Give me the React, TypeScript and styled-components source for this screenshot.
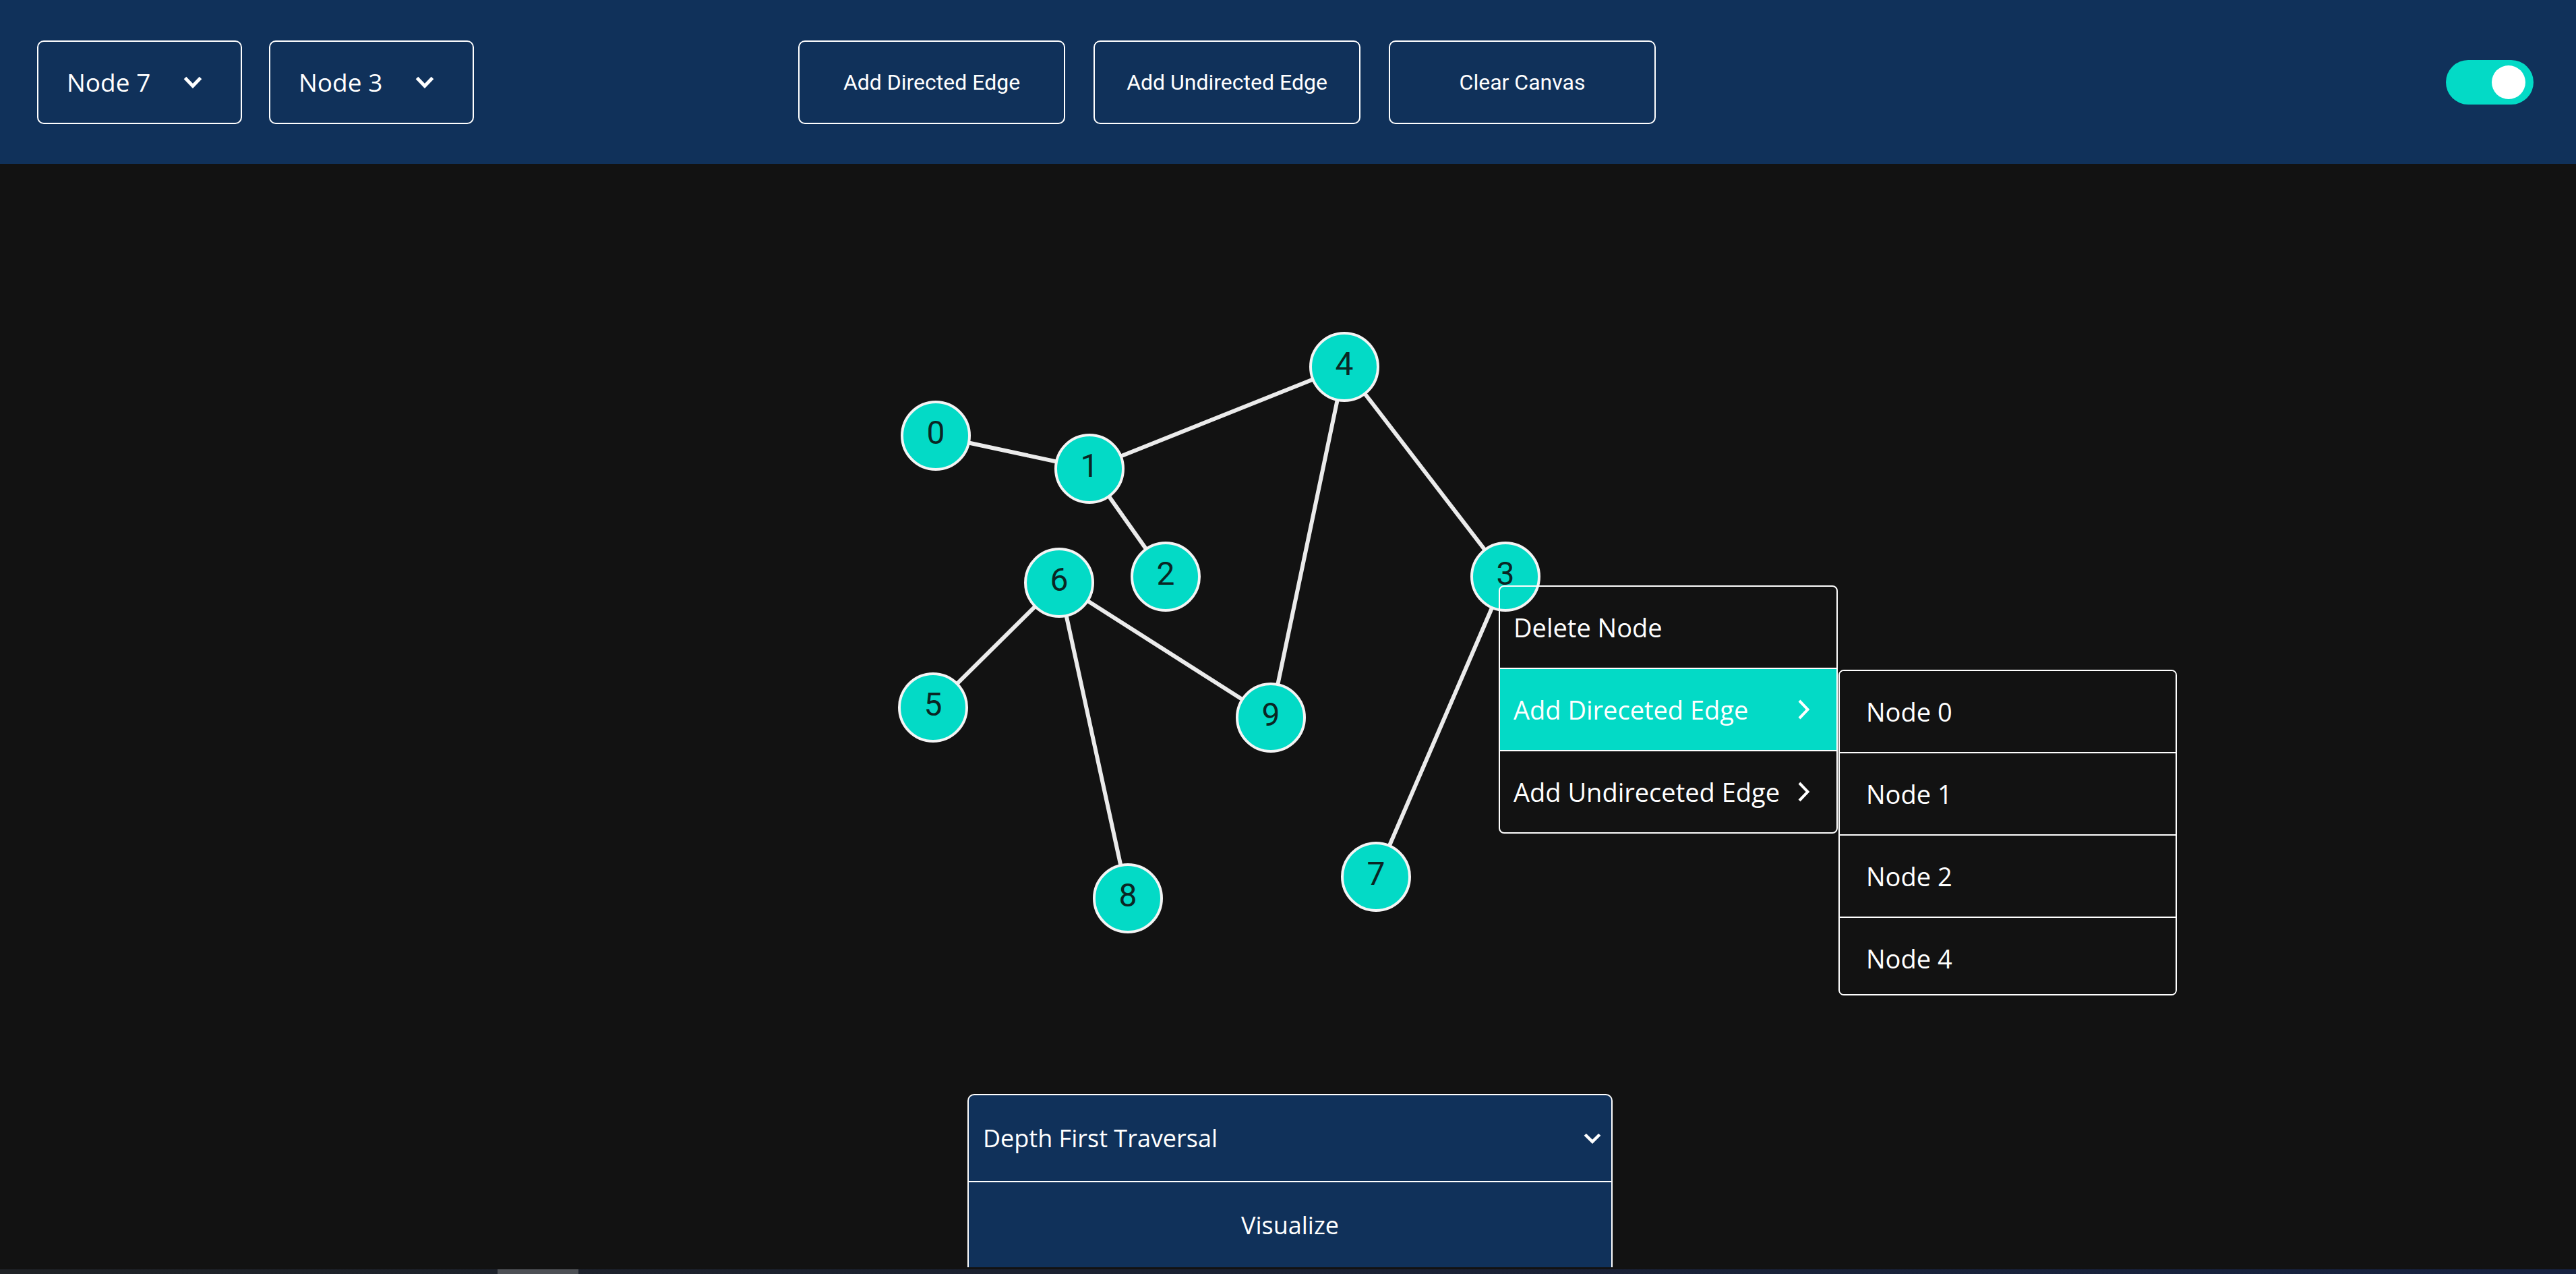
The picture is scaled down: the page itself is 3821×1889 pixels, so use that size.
import React from 'react'
import styled, { createGlobalStyle } from 'styled-components'

/**
 * Graph visualizer screen
 * Toolbar with node pickers and edge actions, a free canvas with the graph,
 * a node context menu and the traversal panel at the bottom.
 */

const NAVY = '#10315a'
const TEAL = '#03dac6'
const CANVAS = '#121212'
const UI_FONT = `'Open Sans', 'Noto Sans', 'DejaVu Sans', sans-serif`
const BTN_FONT = `Roboto, 'Liberation Sans', Arial, sans-serif`

const HEADER_H = 243

interface GraphNode {
  id: number
  x: number
  y: number
}

const nodes: GraphNode[] = [
  { id: 0, x: 1388, y: 646 },
  { id: 1, x: 1616, y: 695 },
  { id: 2, x: 1729, y: 855 },
  { id: 3, x: 2233, y: 855 },
  { id: 4, x: 1994, y: 544 },
  { id: 5, x: 1384, y: 1049 },
  { id: 6, x: 1571, y: 864 },
  { id: 7, x: 2041, y: 1300 },
  { id: 8, x: 1673, y: 1332 },
  { id: 9, x: 1885, y: 1064 },
]

const edges: [number, number][] = [
  [0, 1],
  [1, 4],
  [1, 2],
  [4, 9],
  [4, 3],
  [6, 5],
  [6, 9],
  [6, 8],
  [3, 7],
]

const GlobalStyle = createGlobalStyle`
  html, body {
    margin: 0;
    padding: 0;
    background: ${CANVAS};
    overflow: hidden;
  }
  #root {
    height: 100vh;
  }
  * {
    box-sizing: border-box;
  }
`

const Page = styled.div`
  display: flex;
  flex-direction: column;
  width: 100%;
  height: 100vh;
`

const Header = styled.header`
  flex: 0 0 ${HEADER_H}px;
  display: flex;
  align-items: center;
  padding: 0 63px 0 55px;
  background: ${NAVY};
`

const SelectGroup = styled.div`
  display: flex;
  gap: 40px;
`

const NodeSelect = styled.div`
  display: flex;
  align-items: center;
  gap: 48px;
  width: 304px;
  height: 124px;
  padding-left: 42px;
  border: 2.5px solid #fff;
  border-radius: 10px;
  color: #fff;
  font-family: ${UI_FONT};
  font-size: 37px;
`

const ActionGroup = styled.div`
  display: flex;
  gap: 42px;
  margin-left: 481px;
`

const ActionButton = styled.button`
  width: 396px;
  height: 124px;
  padding: 0;
  border: 2.5px solid #fff;
  border-radius: 10px;
  background: transparent;
  color: #fff;
  font-family: ${BTN_FONT};
  font-size: 32px;
  cursor: pointer;
`

const Toggle = styled.div`
  display: flex;
  align-items: center;
  justify-content: flex-end;
  width: 130px;
  height: 66px;
  margin-left: auto;
  padding-right: 12px;
  border-radius: 33px;
  background: ${TEAL};
`

const Knob = styled.span`
  width: 50px;
  height: 50px;
  border-radius: 50%;
  background: #fff;
`

const Canvas = styled.main`
  position: relative;
  flex: 1;
  overflow: hidden;
  background: ${CANVAS};
`

const GraphSvg = styled.svg`
  display: block;
  width: 100%;
  height: 1379px;
`

const ContextMenu = styled.div`
  position: absolute;
  left: 2223px;
  top: ${868 - HEADER_H}px;
  width: 503px;
  border: 2px solid #fff;
  border-radius: 8px;
  overflow: hidden;
`

const MenuItem = styled.div<{ $active?: boolean }>`
  display: flex;
  align-items: center;
  justify-content: space-between;
  height: 122px;
  padding: 0 40px 0 20px;
  border-bottom: 2px solid #fff;
  background: ${(p) => (p.$active ? TEAL : 'transparent')};
  color: #fff;
  font-family: ${UI_FONT};
  font-size: 38px;

  &:last-child {
    height: 120px;
    border-bottom: none;
  }
`

const SubMenu = styled.div`
  position: absolute;
  left: 2727px;
  top: ${993 - HEADER_H}px;
  width: 502px;
  height: 483px;
  border: 2px solid #fff;
  border-radius: 8px;
  background: ${CANVAS};
  overflow-y: auto;

  &::-webkit-scrollbar {
    width: 12px;
  }
  &::-webkit-scrollbar-track {
    background: #0a0a0a;
  }
  &::-webkit-scrollbar-thumb {
    background: ${TEAL};
    border-radius: 6px;
    border: 1px solid #0a0a0a;
  }
`

const SubMenuItem = styled.div`
  display: flex;
  align-items: center;
  height: 122px;
  padding-left: 39px;
  border-bottom: 2px solid #fff;
  color: #fff;
  font-family: ${UI_FONT};
  font-size: 38px;
`

const TraversalPanel = styled.section`
  width: 957px;
  margin-left: 1435px;
  border: 2px solid #fff;
  border-bottom: none;
  border-radius: 10px 10px 0 0;
  background: ${NAVY};
  color: #fff;
  font-family: ${UI_FONT};
  font-size: 36px;
`

const PanelHead = styled.div`
  display: flex;
  align-items: center;
  justify-content: space-between;
  height: 129px;
  padding: 0 14px 0 21px;
  border-bottom: 2px solid #fff;
`

const PanelAction = styled.div`
  display: flex;
  align-items: center;
  justify-content: center;
  height: 126px;
`

const ScrollStrip = styled.div`
  flex: 0 0 7px;
  display: flex;
  background: linear-gradient(90deg, #1f2226 0%, #1b2130 40%, #172241 100%);
`

const ScrollThumb = styled.span`
  width: 120px;
  margin-left: 738px;
  background: #4d5055;
`

function ChevronDown({ width, height, stroke }: { width: number; height: number; stroke: number }) {
  const p = stroke / 2 + 1
  return (
    <svg width={width} height={height} viewBox={`0 0 ${width} ${height}`}>
      <polyline
        points={`${p},${p} ${width / 2},${height - p} ${width - p},${p}`}
        fill="none"
        stroke="#fff"
        strokeWidth={stroke}
        strokeLinejoin="miter"
      />
    </svg>
  )
}

function ChevronRight() {
  return (
    <svg width={17} height={30} viewBox="0 0 17 30">
      <polyline points="2,2 14.5,15 2,28" fill="none" stroke="#fff" strokeWidth={4} />
    </svg>
  )
}

function Graph() {
  const byId = (id: number) => nodes.find((n) => n.id === id) as GraphNode
  return (
    <GraphSvg viewBox={`0 ${HEADER_H} 3821 1379`} preserveAspectRatio="xMinYMin meet">
      {edges.map(([a, b]) => {
        const from = byId(a)
        const to = byId(b)
        return (
          <line
            key={`${a}-${b}`}
            x1={from.x}
            y1={from.y}
            x2={to.x}
            y2={to.y}
            stroke="#ebebeb"
            strokeWidth={6}
          />
        )
      })}
      {nodes.map((n) => (
        <g key={n.id}>
          <circle cx={n.x} cy={n.y} r={50} fill={TEAL} stroke="#f4f4f4" strokeWidth={4} />
          <text
            x={n.x}
            y={n.y - 5}
            textAnchor="middle"
            dominantBaseline="central"
            fontFamily={BTN_FONT}
            fontSize={48}
            fill="#0a2624"
          >
            {n.id}
          </text>
        </g>
      ))}
    </GraphSvg>
  )
}

export default function App() {
  const targets = nodes.filter((n) => n.id !== 3)

  return (
    <Page>
      <GlobalStyle />
      <Header>
        <SelectGroup>
          <NodeSelect>
            <span>Node 7</span>
            <ChevronDown width={30} height={19} stroke={5} />
          </NodeSelect>
          <NodeSelect>
            <span>Node 3</span>
            <ChevronDown width={30} height={19} stroke={5} />
          </NodeSelect>
        </SelectGroup>
        <ActionGroup>
          <ActionButton>Add Directed Edge</ActionButton>
          <ActionButton>Add Undirected Edge</ActionButton>
          <ActionButton>Clear Canvas</ActionButton>
        </ActionGroup>
        <Toggle>
          <Knob />
        </Toggle>
      </Header>

      <Canvas>
        <Graph />

        <ContextMenu>
          <MenuItem>Delete Node</MenuItem>
          <MenuItem $active>
            <span>Add Direceted Edge</span>
            <ChevronRight />
          </MenuItem>
          <MenuItem>
            <span>Add Undireceted Edge</span>
            <ChevronRight />
          </MenuItem>
        </ContextMenu>

        <SubMenu>
          {targets.map((n) => (
            <SubMenuItem key={n.id}>Node {n.id}</SubMenuItem>
          ))}
        </SubMenu>

        <TraversalPanel>
          <PanelHead>
            <span>Depth First Traversal</span>
            <ChevronDown width={28} height={17} stroke={4.5} />
          </PanelHead>
          <PanelAction>Visualize</PanelAction>
        </TraversalPanel>
      </Canvas>

      <ScrollStrip>
        <ScrollThumb />
      </ScrollStrip>
    </Page>
  )
}
